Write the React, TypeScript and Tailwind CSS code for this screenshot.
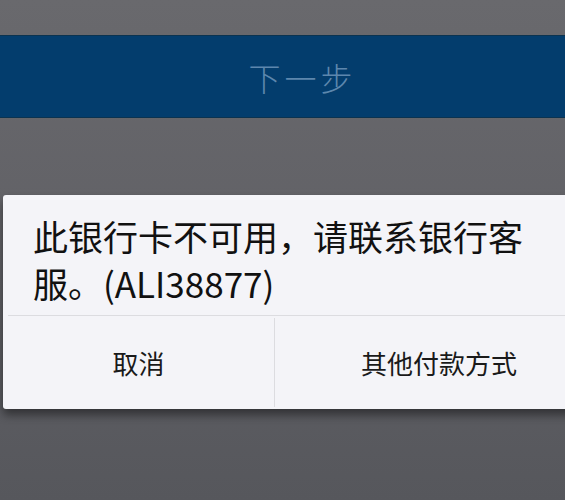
import React from 'react';

const cjk = { fontFamily: '"Noto Sans CJK SC", "Noto Sans", sans-serif' };

const App: React.FC = () => {
  return (
    <div
      className="h-[500px] w-[565px] overflow-hidden bg-gradient-to-b from-[#69696d] via-[#616166] to-[#56575c]"
      style={cjk}
    >
      {/* top strip of the page behind the overlay */}
      <div className="h-[35px]" />

      {/* next step button, dimmed by the overlay */}
      <div className="flex h-[83px] items-center justify-center border-y border-[#0b3350] bg-[#033d6d] pl-[40px]">
        <span className="text-[32px] font-light tracking-[4px] text-[#5d87ad]">下一步</span>
      </div>

      {/* alert dialog */}
      <div className="pl-[3px] pt-[77px]">
        <div className="w-[600px] overflow-hidden rounded-[3px] bg-[#f4f4f8] shadow-[0_6px_10px_rgba(0,0,0,0.45)]">
          <div className="h-[120px] pl-[30px] pr-[40px] pt-[17px]">
            <p className="text-[35px] leading-[47px] text-[#111]">
              此银行卡不可用，请联系银行客服。(ALI38877)
            </p>
          </div>
          <div className="mx-[5px] h-px bg-[#dcdce0]" />
          <div className="flex h-[93px]">
            <button className="flex w-[271px] items-center justify-center text-[26px] text-[#1a1a1a]">
              取消
            </button>
            <div className="my-[2px] w-px bg-[#dcdce0]" />
            <button className="flex flex-1 items-center justify-center text-[26px] text-[#1a1a1a]">
              其他付款方式
            </button>
          </div>
        </div>
      </div>
    </div>
  );
};

export default App;
